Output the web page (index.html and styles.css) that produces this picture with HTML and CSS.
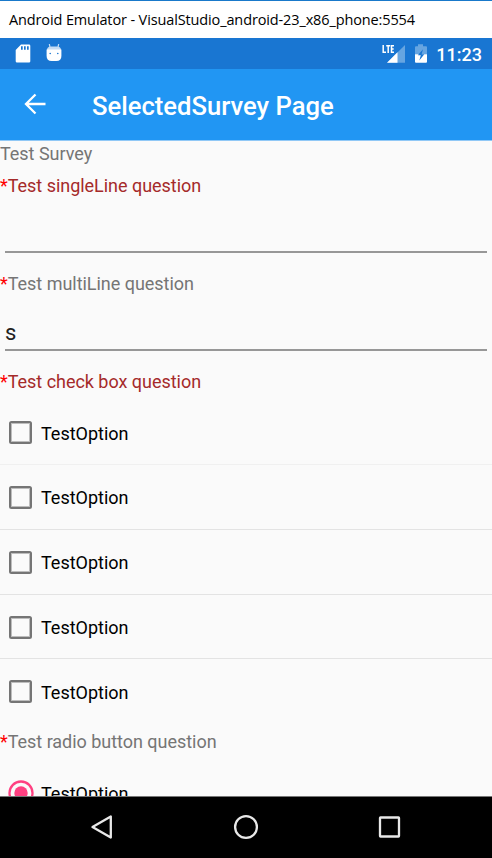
FILE: index.html
```html
<!DOCTYPE html>
<html lang="en">
<head>
<meta charset="utf-8">
<title>SelectedSurvey Page</title>
<link rel="stylesheet" href="styles.css">
</head>
<body>
<div class="window">
  <header class="titlebar"><span class="titlebar-text">Android Emulator - VisualStudio_android-23_x86_phone:5554</span></header>
  <div class="status">
    <svg class="sd" width="16" height="20" viewBox="0 0 16 20"><path fill="#fff" fill-rule="evenodd" d="M6 .5h8a1.3 1.3 0 0 1 1.300 1.300v15.500a1.300 1.300 0 0 1-1.300 1.300H2a1.300 1.300 0 0 1-1.300-1.300V6zM6 2.300v3.500h1.700V2.300zm3 0v3.500h1.700V2.300zm3 0v3.500h1.700V2.300z"/></svg>
    <svg class="droid" width="16" height="20" viewBox="0 0 16 20"><path d="M3.300 0l.7 3M12.700 0L12 3" stroke="#c5dcf4" stroke-width="1.200"/><path d="M1 6q0-3.500 4-3.500h6q4 0 4 3.500z" fill="#c5dcf4"/><path d="M.6 5.500h14.800v6.500q0 5-5 5H5.600q-5 0-5-5z" fill="#fff"/><circle cx="4.200" cy="9.500" r=".8" fill="#1976d2"/><circle cx="11.800" cy="9.500" r=".8" fill="#1976d2"/></svg>
    <span class="spacer"></span>
    <svg class="signal" width="24" height="20" viewBox="0 0 24 20"><path d="M23 1V18.700H5z" fill="#66a5e1"/><path d="M15.500 8.200V18.700H5z" fill="#fff"/><path d="M1.200 1v7.300h2.800M4.200 1.700h4M6.200 1.700v7.200M12 1.700H9.500v6.600H12M9.500 4.900h2.200" fill="none" stroke="#fff" stroke-width="1.500"/></svg>
    <svg class="battery" width="14" height="20" viewBox="0 0 14 20"><path d="M4 .2h5v2h3q1 0 1 1v7.300H1V3.200q0-1 1-1h2z" fill="#66a5e1"/><path d="M1 10.300h12v7.500q0 1-1 1H2q-1 0-1-1z" fill="#fff"/><path d="M9 5.300l-5.200 6h3l-1.500 5.300 5-6.300H7.600z" fill="#1976d2"/></svg>
    <span class="clock">11:23</span>
  </div>
  <div class="appbar">
    <svg class="back" width="22" height="22" viewBox="0 0 22 22"><path d="M11.500 1.500L2 11l9.500 9.500M2 11h19.500" fill="none" stroke="#fff" stroke-width="2.300"/></svg>
    <h1 class="heading">SelectedSurvey Page</h1>
  </div>
  <main class="content">
    <p class="label name">Test Survey</p>
    <p class="label invalid"><b class="star">*</b>Test singleLine question</p>
    <div class="entry"></div>
    <p class="label"><b class="star">*</b>Test multiLine question</p>
    <div class="entry">s</div>
    <p class="label invalid"><b class="star">*</b>Test check box question</p>
    <ul class="options">
      <li class="option"><span class="box"></span><span class="option-text">TestOption</span></li>
      <li class="option"><span class="box"></span><span class="option-text">TestOption</span></li>
      <li class="option"><span class="box"></span><span class="option-text">TestOption</span></li>
      <li class="option"><span class="box"></span><span class="option-text">TestOption</span></li>
      <li class="option"><span class="box"></span><span class="option-text">TestOption</span></li>
    </ul>
    <p class="label radio-label"><b class="star">*</b>Test radio button question</p>
    <div class="option radio-option"><svg class="radio" width="26" height="26" viewBox="0 0 26 26"><circle cx="13" cy="13" r="11.500" fill="none" stroke="#ff4081" stroke-width="2.300"/><circle cx="13" cy="13" r="6.700" fill="#ff4081"/></svg><span class="option-text">TestOption</span></div>
  </main>
  <nav class="nav">
    <svg width="26" height="26" viewBox="0 0 26 26"><path d="M21.800 2.500v21L3.500 13z"/></svg>
    <svg width="26" height="26" viewBox="0 0 26 26"><circle cx="13" cy="13" r="10.900"/></svg>
    <svg width="26" height="26" viewBox="0 0 26 26"><rect x="3" y="3.500" width="19" height="19" rx=".5"/></svg>
  </nav>
</div>
</body>
</html>
```
FILE: styles.css
```css
* { box-sizing: border-box; }
body { margin: 0; font-family: Roboto, sans-serif; }
svg { display: block; flex: none; }
.window { width: 492px; height: 858px; display: flex; flex-direction: column; overflow: hidden; background: #fafafa; }
.titlebar { height: 38px; flex: none; border-top: 1px solid #1979ca; background: #fff; padding-left: 9px; font: 14.5px/37px "Open Sans", sans-serif; letter-spacing: -.125px; color: #000; white-space: nowrap; }
.status { height: 31px; flex: none; display: flex; align-items: flex-start; padding: 6px 10px 0 15px; background: #1976d2; color: #fff; }
.droid { margin-left: 15px; }
.spacer { flex: 1; }
.signal { margin-right: -1px; }
.battery { margin: 0 8px 0 9px; }
.clock { font-size: 18px; font-weight: 500; line-height: 21px; }
.appbar { height: 72px; flex: none; display: flex; align-items: center; padding-left: 24px; background: #2196f3; border-bottom: 1px solid #90c8f6; color: #fff; }
.back { margin-top: -2px; }
.heading { margin: 2px 0 0 46px; font-size: 25.600px; line-height: 32px; font-weight: 500; }
.content { height: 655px; flex: none; overflow: hidden; }
.label { margin: 0; height: 26px; font-size: 18px; line-height: 26px; letter-spacing: -.03px; color: #757575; white-space: nowrap; }
.name { height: 32px; }
.invalid { color: #a52a2a; }
.star { font-weight: 400; color: #f00; }
.entry { height: 54px; margin: 0 5px 18px; border-bottom: 2px solid #979797; padding-top: 22px; font-size: 22px; line-height: 28px; color: #212121; }
.options { margin: 5.400px 0 0; padding: 0; list-style: none; }
.option { height: 64.750px; display: flex; align-items: center; padding: 1px 0 0 9px; border-bottom: 1px solid #e3e3e3; font-size: 18px; color: #000; }
.option:first-child { border-color: #f0f0f0; }
.option:last-child { border-color: transparent; }
.option-text { padding-top: .6px; }
.box { width: 23px; height: 23px; flex: none; border: 2px solid #757575; border-radius: 2.500px; box-shadow: inset 0 0 0 1px #bdbdbd; margin-right: 9px; }
.radio { margin: 0 7.500px 0 -1.500px; }
.radio-label { margin-top: 4.600px; }
.radio-option { margin-top: 6px; }
.nav { height: 62px; flex: none; display: flex; justify-content: center; gap: 118px; padding-top: 17px; border-top: 1px solid #777; background: #000; }
.nav svg { fill: none; stroke: #e8e8e8; stroke-width: 2.300; stroke-linejoin: round; }
```
